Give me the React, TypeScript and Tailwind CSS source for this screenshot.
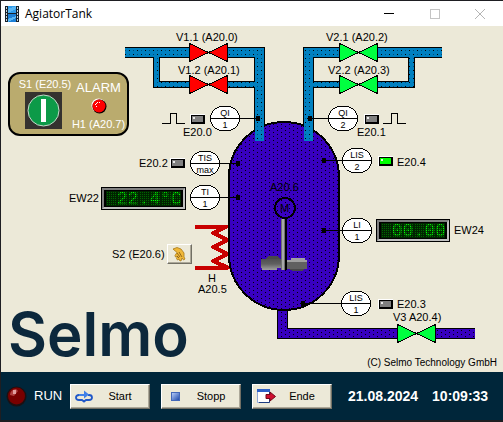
import type { ReactNode } from 'react'

type Tag = { x: number; y: number; top: string; bottom: string; dot: number }

const tags: Tag[] = [
  { x: 225, y: 118, top: 'QI', bottom: '1', dot: 258 },
  { x: 343, y: 118, top: 'QI', bottom: '2', dot: 310 },
  { x: 205, y: 163, top: 'TIS', bottom: 'max', dot: 238 },
  { x: 205, y: 197, top: 'TI', bottom: '1', dot: 238 },
  { x: 357, y: 160, top: 'LIS', bottom: '2', dot: 324 },
  { x: 357, y: 230, top: 'LI', bottom: '1', dot: 324 },
  { x: 356, y: 303, top: 'LIS', bottom: '1', dot: 303 },
]

const valves = [
  { x: 208, y: 52, color: '#ff0000' },
  { x: 208, y: 84, color: '#ff0000' },
  { x: 358, y: 52, color: '#00ff40' },
  { x: 358, y: 84, color: '#00ff40' },
  { x: 416, y: 333, color: '#00ff40' },
]

const labels = [
  { text: 'V1.1 (A20.0)', pos: 'left-[175px] top-[4px]' },
  { text: 'V1.2 (A20.1)', pos: 'left-[177px] top-[37px]' },
  { text: 'V2.1 (A20.2)', pos: 'left-[325px] top-[4px]' },
  { text: 'V2.2 (A20.3)', pos: 'left-[327px] top-[37px]' },
  { text: 'E20.0', pos: 'left-[182px] top-[99px]' },
  { text: 'E20.1', pos: 'left-[356px] top-[99px]' },
  { text: 'E20.2', pos: 'left-[138px] top-[130px]' },
  { text: 'E20.4', pos: 'left-[396px] top-[129px]' },
  { text: 'EW22', pos: 'left-[68px] top-[165px]' },
  { text: 'EW24', pos: 'left-[453px] top-[197px]' },
  { text: 'S2 (E20.6)', pos: 'left-[111px] top-[221px]' },
  { text: 'H', pos: 'left-[207px] top-[245px]' },
  { text: 'A20.5', pos: 'left-[197px] top-[256px]' },
  { text: 'A20.6', pos: 'left-[269px] top-[154px]' },
  { text: 'M', pos: 'left-[279px] top-[175px]' },
  { text: 'E20.3', pos: 'left-[396px] top-[271px]' },
  { text: 'V3 A20.4)', pos: 'left-[392px] top-[284px]' },
]

const leds = [
  { id: 'E20.0', on: false, pos: 'left-[189px] top-[88px]' },
  { id: 'E20.1', on: false, pos: 'left-[363px] top-[88px]' },
  { id: 'E20.2', on: false, pos: 'left-[169px] top-[132px]' },
  { id: 'E20.4', on: true, pos: 'left-[377px] top-[130px]' },
  { id: 'E20.3', on: false, pos: 'left-[377px] top-[273px]' },
]

const bevel =
  'border border-t-white border-l-white border-r-[#716f64] border-b-[#716f64] bg-[#ece9d8] shadow-[inset_-1px_-1px_0_#aca899]'

const TitleBar = () => (
  <header className="flex h-[25px] items-center bg-white pl-1">
    <svg width="14" height="16" viewBox="0 0 14 16" shapeRendering="crispEdges" aria-hidden="true">
      <rect width="14" height="16" fill="#17222c" />
      <rect x="3" y="0" width="8" height="7" fill="#2f9bea" />
      <rect x="3" y="8" width="8" height="8" fill="#1c7fd6" />
      <path d="M3 7V3l8-3v3zM3 16v-3l8-3v2z" fill="#58b6f5" />
      {[1, 4, 7, 10, 13].map((y) => (
        <g key={y} fill="#c9d3da">
          <rect x="1" y={y} width="1" height="2" />
          <rect x="12" y={y} width="1" height="2" />
        </g>
      ))}
    </svg>
    <h1 className="ml-1.5 flex-1 font-['Open_Sans',sans-serif] text-[12px] leading-4 text-black">AgiatorTank</h1>
    <button aria-label="Minimize" className="flex h-full w-[46px] items-center justify-center">
      <svg width="10" height="10" shapeRendering="crispEdges">
        <path d="M0 4.5h10" stroke="#000" />
      </svg>
    </button>
    <button aria-label="Maximize" disabled className="flex h-full w-[45px] items-center justify-center">
      <svg width="10" height="10">
        <rect x=".5" y=".5" width="9" height="9" fill="none" stroke="#c4c4c4" />
      </svg>
    </button>
    <button aria-label="Close" disabled className="flex h-full w-[46px] items-center justify-center">
      <svg width="10" height="10">
        <path d="M0 0l10 10M10 0L0 10" stroke="#b4b4b4" />
      </svg>
    </button>
  </header>
)

const Plant = () => (
  <svg
    className="block font-['Liberation_Sans',Arial,sans-serif]"
    width="502"
    height="346"
    viewBox="1 26 502 346"
    shapeRendering="crispEdges"
    aria-hidden="true"
  >
    <defs>
      <pattern id="water" width="8" height="8" patternUnits="userSpaceOnUse">
        <rect width="8" height="8" fill="#0080c0" />
        <path d="M1 2h1v1h-1zM5 6h1v1h-1z" fill="#000" />
        <path d="M5 2h1v1h-1zM1 6h1v1h-1z" fill="#00507c" />
      </pattern>
      <pattern id="mix" width="8" height="4" patternUnits="userSpaceOnUse">
        <rect width="8" height="4" fill="#3800c0" />
        <path d="M1 0h1v1h-1zM5 2h1v1h-1z" fill="#000" />
      </pattern>
      <linearGradient id="blade" x1="0" y1="0" x2="0" y2="1">
        <stop offset="0" stopColor="#505050" />
        <stop offset=".45" stopColor="#606060" />
        <stop offset="1" stopColor="#a0a0a0" />
      </linearGradient>
    </defs>

    {/* heater */}
    <path
      d="M195 226.500H227L213 233L228 240L213 247L228 254L213 261L228 267.500H195"
      fill="none"
      stroke="#c80000"
      strokeWidth="4"
      strokeLinejoin="round"
    />

    {/* pipe outlines */}
    <g fill="none" stroke="#000">
      <path d="M125 52.500H259.500V141M442 52.500H308.500V141M282.500 300V333.500H475" strokeWidth="11" />
      <path d="M156.500 52.500V84.500H259.500M411.500 52.500V84.500H308.500" strokeWidth="7" />
    </g>

    {/* tank */}
    <rect x="229" y="122" width="110" height="188" rx="55" fill="url(#mix)" stroke="#000" strokeWidth="2" />

    {/* pipe contents */}
    <g fill="none">
      <path d="M125 52.500H259.500V141M442 52.500H308.500V141" stroke="url(#water)" strokeWidth="9" />
      <path d="M156.500 52.500V84.500H259.500M411.500 52.500V84.500H308.500" stroke="url(#water)" strokeWidth="5" />
      <path d="M282.500 311V333.500H475" stroke="url(#mix)" strokeWidth="9" />
    </g>

    {valves.map((v) => (
      <g key={`${v.x}-${v.y}`} transform={`translate(${v.x} ${v.y})`}>
        <rect x="-19" y="-9" width="39" height="19" fill="#ece9d8" />
        <path d="M-18.500 -8.500L.500 .500L-18.500 9.500ZM19.500 -8.500L.500 .500L19.500 9.500Z" fill={v.color} stroke="#000" />
      </g>
    ))}

    {/* pulse signals */}
    <path d="M162 123.500H170.500V113.500H176.500V123.500H185M383 123.500H391.500V113.500H397.500V123.500H406" fill="none" stroke="#000" />

    {/* agitator */}
    <circle cx="285" cy="208" r="10" fill="none" stroke="#000" strokeWidth="2" />
    <path d="M265 259l4-3h8l3 3zM289 269h16l-3 2h-9z" fill="#484848" />
    <path d="M261 259h20v9h-4v2h-15v-2h-1z" fill="url(#blade)" />
    <path d="M287 260h4v-2h14v2h2v9h-20z" fill="#606060" />
    <path d="M291 258h14v2h-14zM287 260h20v2h-20z" fill="#a0a0a0" />
    <rect x="281" y="219" width="4" height="51" fill="#707070" />
    <rect x="282" y="219" width="2" height="51" fill="#a8a8a8" />
    <rect x="285" y="219" width="2" height="51" fill="#000" />

    {/* measuring points */}
    {tags.map((t) => (
      <g key={`${t.x}-${t.y}`}>
        <path d={`M${t.x} ${t.y + 0.5}H${t.dot}`} stroke="#000" />
        <circle cx={t.dot} cy={t.y + 0.5} r="2.500" fill="#000" />
        <rect x={t.x - 14.5} y={t.y - 11.5} width="29" height="24" rx="12" fill="#fff" stroke="#000" />
        <path d={`M${t.x - 14} ${t.y + 0.5}h29`} stroke="#000" />
        <text x={t.x} y={t.y - 2} fontSize="9" textAnchor="middle">
          {t.top}
        </text>
        <text x={t.x} y={t.y + 10} fontSize="9" textAnchor="middle">
          {t.bottom}
        </text>
      </g>
    ))}
  </svg>
)

const Led = ({ on, pos, id }: { on: boolean; pos: string; id: string }) => (
  <span
    role="img"
    aria-label={`${id} ${on ? 'on' : 'off'}`}
    className={`absolute h-[10px] w-[15px] border-t border-l border-white ${pos}`}
  >
    <span className={`block h-full border border-r-2 border-b-2 border-black ${on ? 'bg-[#00ff00]' : 'bg-[#808080]'}`}>
      <span className="ml-px mt-px block size-[2px] bg-[#e8e8e8]" />
    </span>
  </span>
)

// LED matrix: the dark grid over the value leaves one bright dot every 2px
const MatrixDisplay = ({ id, value, pos }: { id: string; value: string; pos: string }) => (
  <output aria-label={id} className={`absolute border border-black bg-black ${pos}`}>
    <span className="block border-2 border-t-[#808080] border-l-[#808080] border-r-[#c0c0c0] border-b-[#c0c0c0] px-[2px] py-px">
      <span className="relative block h-[15px] bg-[#006400] font-['Liberation_Mono',monospace] text-[18px] leading-[16px] whitespace-pre text-[#00ff00]">
        {value}
        <svg className="absolute inset-0 size-full" shapeRendering="crispEdges" aria-hidden="true">
          <defs>
            <pattern id={`grid-${id}`} width="11" height="2" patternUnits="userSpaceOnUse">
              <path
                d="M0 0h11v1H0zM0 1h1v1H0zM2 1h1v1H2zM4 1h1v1H4zM6 1h1v1H6zM8 1h1v1H8zM10 1h1v1h-1z"
                fill="#000"
                fillOpacity=".65"
              />
            </pattern>
          </defs>
          <rect width="100%" height="100%" fill={`url(#grid-${id})`} />
        </svg>
      </span>
    </span>
  </output>
)

const SwitchPanel = () => (
  <section className="absolute left-[7px] top-[46px] flex h-[64px] w-[121px] rounded-[12px] border-2 border-black bg-[#baab6e] text-white">
    <div className="flex w-[66px] flex-col items-center pt-[3px]">
      <label htmlFor="s1" className="pl-1 text-[11px] leading-[14px] whitespace-nowrap">
        S1 (E20.5)
      </label>
      <button id="s1" className="mt-px flex size-[37px] items-center justify-center bg-[#35322f]">
        <svg width="33" height="33" viewBox="0 0 33 33" aria-hidden="true">
          <circle cx="16.500" cy="16.500" r="15.500" fill="#0c9a48" stroke="#c8d8cc" strokeWidth="1" />
          <rect x="14" y="5" width="5" height="23" fill="#fff" />
        </svg>
      </button>
    </div>
    <div className="flex w-[45px] flex-col items-center pt-1.5">
      <span className="text-[13px] leading-4">ALARM</span>
      <svg className="mt-0.5 shrink-0" width="16" height="16" viewBox="0 0 16 16" role="img" aria-label="Alarm lamp">
        <circle cx="7.500" cy="7.500" r="7" fill="#fff" />
        <circle cx="8.500" cy="8.500" r="7" fill="#000" />
        <circle cx="8" cy="8" r="6.500" fill="#ff0000" />
        <path d="M4 7l3-3M5 9l1-1M8 5l1-1" stroke="#fff" />
      </svg>
      <span className="mt-[3px] text-[11px] leading-[14px] whitespace-nowrap">H1 (A20.7)</span>
    </div>
  </section>
)

const FooterButton = ({ icon, children }: { icon: ReactNode; children: ReactNode }) => (
  <button className={`flex h-[25px] w-[80px] items-center px-[3px] text-[11px] text-black ${bevel}`}>
    <span className="flex w-[20px] shrink-0 justify-center">{icon}</span>
    <span className="flex-1">{children}</span>
  </button>
)

const Footer = () => (
  <footer className="flex h-[48px] items-center bg-[#00263a] pl-[5px] pr-3 text-white">
    <svg className="shrink-0" width="21" height="21" viewBox="0 0 21 21" role="img" aria-label="Run lamp">
      <circle cx="10.500" cy="10.500" r="10" fill="#1c1012" />
      <circle cx="10.500" cy="10" r="8.500" fill="#780000" />
      <path d="M4 9a6 6 0 0 1 6-6l2 2-4 5z" fill="#b04040" />
      <rect x="7" y="4" width="3" height="4" fill="#e0a0a0" />
    </svg>
    <span className="ml-[7px] w-9 text-[13px] leading-4">RUN</span>
    <div className="flex gap-[11px]">
      <FooterButton
        icon={
          <svg width="18" height="13" viewBox="0 0 18 13" fill="none" aria-hidden="true">
            <path
              d="M4 5C0 5 0 10 4 10H7l2 1.500L11 10h3C18 10 18 5 14 5H13"
              stroke="#2058c8"
              strokeWidth="1.800"
            />
            <path d="M4 4h5V0.500l5 4-5 4V6H4z" fill="#4080e8" />
          </svg>
        }
      >
        Start
      </FooterButton>
      <FooterButton
        icon={
          <svg width="9" height="9" viewBox="0 0 9 9" aria-hidden="true">
            <defs>
              <linearGradient id="stop" x1="0" y1="0" x2="1" y2="1">
                <stop offset="0" stopColor="#c0d4fc" />
                <stop offset="1" stopColor="#1844a8" />
              </linearGradient>
            </defs>
            <rect x=".5" y=".5" width="8" height="8" fill="url(#stop)" stroke="#4468b8" />
          </svg>
        }
      >
        Stopp
      </FooterButton>
      <FooterButton
        icon={
          <svg width="19" height="14" viewBox="0 0 19 14" aria-hidden="true">
            <path d="M.5 .5h12v13H.5z" fill="#fff" stroke="#90a8d8" />
            <path d="M0 0h13v3H0z" fill="#2c60c8" />
            <path d="M12.500 3v10.500H2" fill="none" stroke="#1c3c80" />
            <path d="M9 5.500h4V3l5.500 4.500L13 12V9.500H9z" fill="#d01030" stroke="#700818" />
          </svg>
        }
      >
        Ende
      </FooterButton>
    </div>
    <time className="ml-4 flex gap-[14px] text-[14px] font-bold leading-4" dateTime="2024-08-21T10:09:33">
      <span>21.08.2024</span>
      <span>10:09:33</span>
    </time>
  </footer>
)

export default function App() {
  return (
    <div className="w-full overflow-x-hidden border-t border-b-2 border-l border-[#1e1e22] bg-[#ece9d8] font-['Liberation_Sans',Arial,sans-serif]">
      <TitleBar />
      <main className="relative">
        <Plant />
        <SwitchPanel />
        {leds.map((led) => (
          <Led key={led.id} {...led} />
        ))}
        {labels.map((label) => (
          <span
            key={label.text}
            className={`absolute text-[11px] leading-[14px] whitespace-nowrap text-black ${label.pos}`}
          >
            {label.text}
          </span>
        ))}
        <MatrixDisplay id="EW22" value=" 22.4°C" pos="left-[100px] top-[161px] w-[85px]" />
        <MatrixDisplay id="EW24" value=" 00.00" pos="left-[375px] top-[193px] w-[74px]" />
        <button
          aria-label="S2 (E20.6)"
          className={`absolute left-[166px] top-[218px] flex h-[20px] w-[25px] items-center justify-center ${bevel}`}
        >
          <svg width="15" height="15" viewBox="0 0 15 15" aria-hidden="true">
            <path
              d="M1 2l4-1.500 4 1.500 3 4v4l1 2-1.500 1-1.500-2-1 3-1.500-.500-.500-1.500-1.500 1-1-1.500 1-2-2 .500-.500-1.500 2-3z"
              fill="#f0b838"
              stroke="#a87818"
              strokeWidth=".8"
            />
            <path d="M5 6l3 4M7 5l3 5M5 9l2 2" stroke="#7c5410" strokeWidth=".8" />
          </svg>
        </button>
        <div className="absolute left-[7px] top-[272px] font-['Inter',sans-serif] text-[60px] leading-[72px] font-semibold text-[#0c283c]">
          Selmo
        </div>
        <small className="absolute right-[6px] top-[330px] text-[10px] leading-[14px] text-black">
          (C) Selmo Technology GmbH
        </small>
      </main>
      <Footer />
    </div>
  )
}
